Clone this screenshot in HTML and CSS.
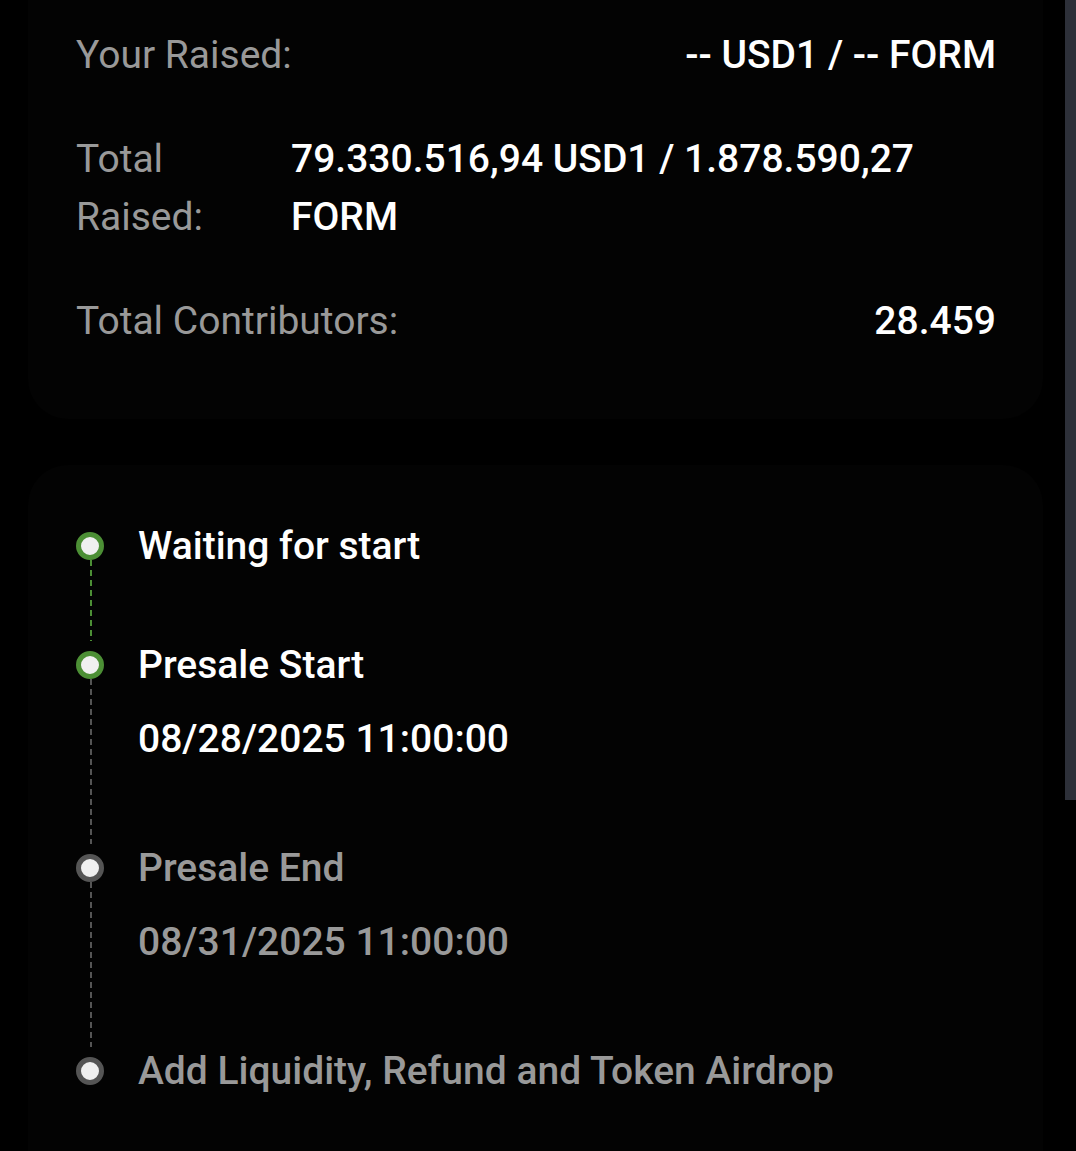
FILE: index.html
```html
<!DOCTYPE html>
<html lang="en">
<head>
    <meta charset="UTF-8">
    <meta name="viewport" content="width=device-width, initial-scale=1.0">
    <title>Presale Info</title>
    <link rel="stylesheet" href="styles.css">
</head>
<body>
    <div class="page">
        <!-- raised summary -->
        <div class="card info-card">
            <div class="row">
                <span class="label">Your Raised:</span>
                <span class="value">-- USD1 / -- FORM</span>
            </div>
            <div class="row row-wide">
                <span class="label">Total Raised:</span>
                <span class="value">79.330.516,94 USD1 / 1.878.590,27 FORM</span>
            </div>
            <div class="row">
                <span class="label">Total Contributors:</span>
                <span class="value">28.459</span>
            </div>
        </div>

        <!-- timeline -->
        <div class="card timeline-card">
            <div class="step">
                <div class="marker">
                    <span class="dot dot-done"></span>
                    <span class="line line-done"></span>
                </div>
                <div class="step-body">
                    <div class="step-title">Waiting for start</div>
                </div>
            </div>
            <div class="step">
                <div class="marker">
                    <span class="dot dot-done"></span>
                    <span class="line"></span>
                </div>
                <div class="step-body">
                    <div class="step-title">Presale Start</div>
                    <div class="step-date">08/28/2025 11:00:00</div>
                </div>
            </div>
            <div class="step step-pending">
                <div class="marker">
                    <span class="dot"></span>
                    <span class="line"></span>
                </div>
                <div class="step-body">
                    <div class="step-title">Presale End</div>
                    <div class="step-date">08/31/2025 11:00:00</div>
                </div>
            </div>
            <div class="step step-pending">
                <div class="marker">
                    <span class="dot"></span>
                </div>
                <div class="step-body">
                    <div class="step-title">Add Liquidity, Refund and Token Airdrop</div>
                </div>
            </div>
        </div>
    </div>

    <div class="scrollbar"></div>
</body>
</html>
```

FILE: styles.css
```css
* {
    margin: 0;
    padding: 0;
    box-sizing: border-box;
}

html, body {
    height: 100%;
    overflow: hidden;
}

body {
    font-family: Roboto, 'Noto Sans', sans-serif;
    background: #000;
    color: #fff;
    font-size: 39px;
}

.page {
    padding: 0 33px 0 28px;
}

.card {
    background: #030303;
    border-radius: 40px;
    padding-left: 48px;
    padding-right: 47px;
}

.info-card {
    margin-top: -40px;
    padding-top: 66px;
    padding-bottom: 69px;
    display: flex;
    flex-direction: column;
    gap: 46px;
}

.row {
    display: flex;
    justify-content: space-between;
    gap: 25px;
    line-height: 58px;
}

.label {
    color: #999;
}

.value {
    font-weight: 500;
    text-align: right;
}

.row-wide .label {
    flex: 0 0 190px;
}

.row-wide .value {
    flex: 1;
    text-align: left;
}

.timeline-card {
    margin-top: 46px;
    padding-top: 57px;
    padding-bottom: 60px;
}

.step {
    display: flex;
    gap: 34px;
}

.marker {
    flex: 0 0 28px;
    display: flex;
    flex-direction: column;
    align-items: center;
    padding-top: 10px;
}

.dot {
    width: 28px;
    height: 28px;
    border-radius: 50%;
    background: #f0f0f0;
    border: 5px solid #555;
    flex-shrink: 0;
}

.dot-done {
    border-color: #4c8f35;
}

.line {
    flex: 1;
    width: 2px;
    margin-left: 2px;
    background: repeating-linear-gradient(to bottom, #555 0 6px, transparent 6px 10px);
}

.line-done {
    background: repeating-linear-gradient(to bottom, #4c8f35 0 6px, transparent 6px 10px);
}

.step-body {
    padding-bottom: 71px;
    font-weight: 500;
    line-height: 48px;
}

.step-date {
    margin-top: 26px;
    margin-bottom: 10px;
}

.step-pending .step-body {
    color: #999;
}

.scrollbar {
    position: fixed;
    top: 0;
    right: 0;
    width: 11px;
    height: 800px;
    background: #2d3039;
}
```
